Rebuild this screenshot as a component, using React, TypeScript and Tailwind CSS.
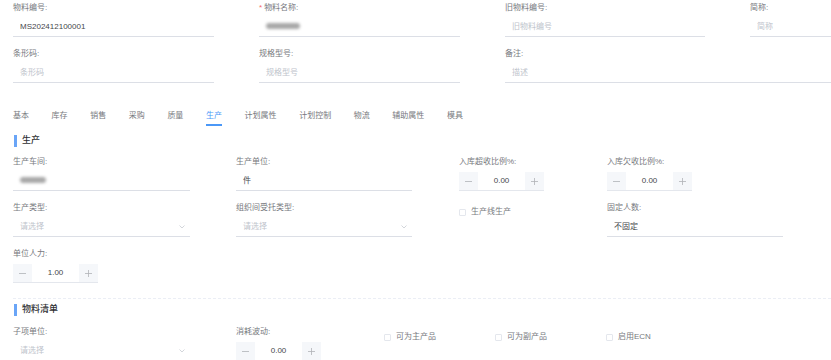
import React from 'react';

const FONT = '"Liberation Sans", "Noto Sans CJK SC", sans-serif';

function Label({ text, required }: { text: string; required?: boolean }) {
  return (
    <div className="h-[12px] mb-[4px] text-[8px] leading-[12px] text-[#77797e] whitespace-nowrap">
      {required && <span className="text-[#f56c6c] mr-[2px]">*</span>}
      {text}
    </div>
  );
}

function TextInput({ value, placeholder, width }: { value?: React.ReactNode; placeholder?: string; width: string }) {
  return (
    <div className={`${width} h-[19px] border-b border-[#dcdfe6] pl-[7px] flex items-center text-[8px]`}>
      {value ? (
        <span className="text-[#45474b]">{value}</span>
      ) : (
        <span className="text-[#c0c4cc]">{placeholder}</span>
      )}
    </div>
  );
}

function Select({ width }: { width: string }) {
  return (
    <div className={`${width} h-[19px] border-b border-[#dcdfe6] pl-[7px] pr-[5px] flex items-center justify-between text-[8px]`}>
      <span className="text-[#c0c4cc]">请选择</span>
      <svg width="6" height="4" viewBox="0 0 6 4" fill="none">
        <path d="M0.5 0.5 L3 3 L5.5 0.5" stroke="#c0c4cc" strokeWidth="0.7" />
      </svg>
    </div>
  );
}

function Stepper({ value }: { value: string }) {
  return (
    <div className="w-[85px] h-[19px] border-b border-[#e4e7ed] flex items-stretch text-[8px]">
      <div className="w-[19px] bg-[#f5f7fa] flex items-center justify-center">
        <svg width="7" height="1" viewBox="0 0 7 1"><rect width="7" height="0.8" fill="#b1b3b8" /></svg>
      </div>
      <div className="flex-1 flex items-center justify-center text-[#45474b]">{value}</div>
      <div className="w-[19px] bg-[#f5f7fa] flex items-center justify-center">
        <svg width="7" height="7" viewBox="0 0 7 7">
          <rect x="0" y="3.1" width="7" height="0.8" fill="#b1b3b8" />
          <rect x="3.1" y="0" width="0.8" height="7" fill="#b1b3b8" />
        </svg>
      </div>
    </div>
  );
}

function Checkbox({ text }: { text: string }) {
  return (
    <div className="h-[12px] flex items-center gap-[5px] text-[8px] text-[#77797e] whitespace-nowrap">
      <span className="w-[7px] h-[7px] border border-[#e4e7ed] rounded-[1px] bg-white" />
      {text}
    </div>
  );
}

function Blur({ w }: { w: string }) {
  return <span className={`inline-block ${w} h-[6px] bg-[#a8a8a8] blur-[1.5px] rounded-sm`} />;
}

function SectionTitle({ text }: { text: string }) {
  return (
    <div className="h-[12px] flex items-center pl-[14px]">
      <span className="w-[3px] h-[12px] bg-[#6aa5f7]" />
      <span className="ml-[5px] text-[9px] font-medium text-[#303133]">{text}</span>
    </div>
  );
}

const TABS = ['基本', '库存', '销售', '采购', '质量', '生产', '计划属性', '计划控制', '物流', '辅助属性', '模具'];

export default function App() {
  return (
    <div className="w-[831px] h-[360px] overflow-hidden bg-white" style={{ fontFamily: FONT }}>
      {/* basic fields */}
      <div className="pt-[2px] pl-[13px] grid grid-cols-[246px_246px_245px_1fr] gap-y-[11px]">
        <div>
          <Label text="物料编号:" />
          <TextInput width="w-[201px]" value="MS202412100001" />
        </div>
        <div>
          <Label text="物料名称:" required />
          <TextInput width="w-[201px]" value={<Blur w="w-[34px]" />} />
        </div>
        <div>
          <Label text="旧物料编号:" />
          <TextInput width="w-[200px]" placeholder="旧物料编号" />
        </div>
        <div>
          <Label text="简称:" />
          <TextInput width="w-full" placeholder="简称" />
        </div>
        <div>
          <Label text="条形码:" />
          <TextInput width="w-[201px]" placeholder="条形码" />
        </div>
        <div>
          <Label text="规格型号:" />
          <TextInput width="w-[201px]" placeholder="规格型号" />
        </div>
        <div className="col-span-2">
          <Label text="备注:" />
          <TextInput width="w-full" placeholder="描述" />
        </div>
      </div>

      {/* tabs */}
      <div className="mt-[26px] pl-[13px] flex gap-[22.6px] text-[8px] leading-[14px]">
        {TABS.map((t) => (
          <div
            key={t}
            className={`h-[17px] ${t === '生产' ? 'text-[#4b98f7] border-b-2 border-[#4b98f7]' : 'text-[#77797e]'}`}
          >
            {t}
          </div>
        ))}
      </div>

      <div className="mt-[9px]">
        <SectionTitle text="生产" />
      </div>

      {/* production */}
      <div className="mt-[9px] pl-[13px] grid grid-cols-[223px_223px_148px_1fr] gap-y-[11px]">
        <div>
          <Label text="生产车间:" />
          <TextInput width="w-[177px]" value={<Blur w="w-[26px]" />} />
        </div>
        <div>
          <Label text="生产单位:" />
          <TextInput width="w-[176px]" value="件" />
        </div>
        <div>
          <Label text="入库超收比例%:" />
          <Stepper value="0.00" />
        </div>
        <div>
          <Label text="入库欠收比例%:" />
          <Stepper value="0.00" />
        </div>
        <div>
          <Label text="生产类型:" />
          <Select width="w-[177px]" />
        </div>
        <div>
          <Label text="组织间受托类型:" />
          <Select width="w-[176px]" />
        </div>
        <div className="pt-[4px]">
          <Checkbox text="生产线生产" />
        </div>
        <div>
          <Label text="固定人数:" />
          <TextInput width="w-[176px]" value="不固定" />
        </div>
        <div className="col-span-4">
          <Label text="单位人力:" />
          <Stepper value="1.00" />
        </div>
      </div>

      <div className="mt-[15px] ml-[13px] border-t border-dashed border-[#ebeef5]" />

      <div className="mt-[5px]">
        <SectionTitle text="物料清单" />
      </div>

      {/* bom */}
      <div className="mt-[10px] pl-[13px] flex">
        <div className="w-[223px]">
          <Label text="子项单位:" />
          <Select width="w-[177px]" />
        </div>
        <div className="w-[148px]">
          <Label text="消耗波动:" />
          <Stepper value="0.00" />
        </div>
        <div className="w-[111px] pt-[5px]">
          <Checkbox text="可为主产品" />
        </div>
        <div className="w-[111px] pt-[5px]">
          <Checkbox text="可为副产品" />
        </div>
        <div className="pt-[5px]">
          <Checkbox text="启用ECN" />
        </div>
      </div>
    </div>
  );
}
